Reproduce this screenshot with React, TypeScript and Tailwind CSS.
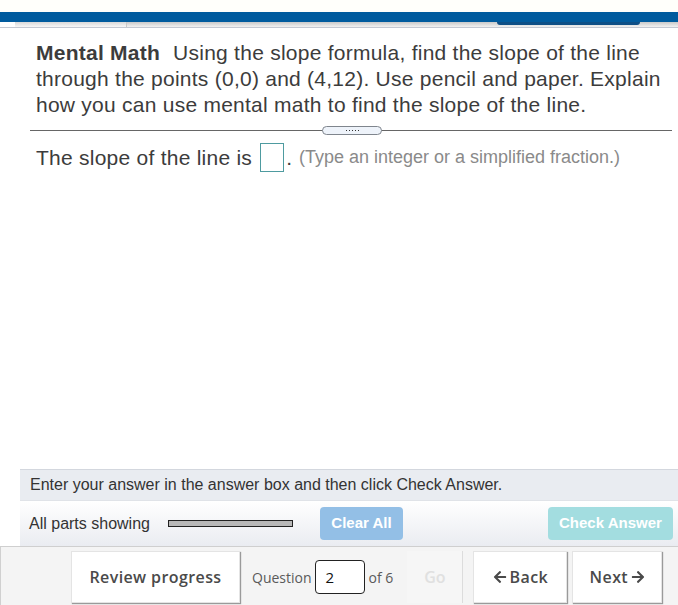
import React from "react";
import { FaArrowLeft, FaArrowRight } from "react-icons/fa";

export default function App() {
  const arial = { fontFamily: '"Liberation Sans", Arial, sans-serif' };
  return (
    <div className="w-[678px] h-[605px] bg-white flex flex-col overflow-hidden" style={arial}>
      {/* top header strip */}
      <div className="h-[12px] bg-[#fffffb] shrink-0" />
      <div className="h-[10px] bg-[#005b9e] shrink-0" />
      <div className="h-[6px] shrink-0 flex bg-gradient-to-b from-[#c9c9c9] to-[#f2f2f2] border-b border-[#c3c8d2]">
        <div className="w-[15px] bg-white" />
        <div className="w-[112px] bg-gradient-to-b from-[#d8d8d8] to-[#f8f8f8] border-r border-[#c8c8c8]" />
        <div className="w-[370px]" />
        <div className="w-[143px] h-[3px] bg-[#0e4f86] rounded-b-[4px]" />
      </div>

      {/* content */}
      <div className="flex-1 ml-[20px] flex flex-col">
        <div className="pl-[16px] pr-[8px] pt-[12px] text-[21px] tracking-[0.25px] leading-[26px] text-[#3c3c3c]">
          <span className="font-bold mr-[13px]">Mental Math</span>Using the slope formula, find the slope of the line through the points (0,0) and (4,12). Use pencil and paper. Explain how you can use mental math to find the slope of the line.
        </div>
        <div className="relative mt-[12px] ml-[10px] mr-[6px] h-[1px] bg-[#666]">
          <div className="absolute left-[292px] top-[-4px] w-[60px] h-[9px] rounded-full border border-[#7f858d] bg-[#eef3fa] flex items-center justify-center gap-[2px]">
            <span className="w-[1px] h-[1px] bg-[#333]" />
            <span className="w-[1px] h-[1px] bg-[#333]" />
            <span className="w-[1px] h-[1px] bg-[#333]" />
            <span className="w-[1px] h-[1px] bg-[#333]" />
            <span className="w-[1px] h-[1px] bg-[#333]" />
          </div>
        </div>
        <div className="mt-[12px] pl-[16px] flex items-center h-[29px]">
          <span className="text-[21px] tracking-[0.25px] text-[#3c3c3c]">The slope of the line is</span>
          <span className="ml-[8px] w-[24px] h-[29px] border border-[#4e9ba0] bg-white" />
          <span className="text-[21px] text-[#3c3c3c] ml-[2px]">.</span>
          <span className="text-[18px] text-[#8a8a8a] ml-[7px]">(Type an integer or a simplified fraction.)</span>
        </div>
      </div>

      {/* instruction bar */}
      <div className="ml-[20px] h-[31px] shrink-0 bg-[#e9ecf1] border-t border-[#d3d7de] flex items-center pl-[10px] text-[16px] text-[#333]">
        Enter your answer in the answer box and then click Check Answer.
      </div>
      <div className="ml-[20px] h-[46px] shrink-0 bg-gradient-to-b from-[#ffffff] to-[#eaecf1] border-t border-[#e0e3e8] flex items-center">
        <span className="ml-[9px] text-[16px] text-[#333]">All parts showing</span>
        <div className="ml-[18px] w-[125px] h-[7px] bg-[#b8b8b8] border border-[#222]" />
        <div className="ml-[27px] w-[83px] h-[33px] rounded-[4px] bg-[#93bfe6] text-white font-bold text-[15px] flex items-center justify-center">
          Clear All
        </div>
        <div className="ml-[145px] w-[125px] h-[33px] rounded-[4px] bg-[#a3dde0] text-white font-bold text-[15px] flex items-center justify-center">
          Check Answer
        </div>
      </div>

      {/* footer */}
      <div
        className="h-[59px] shrink-0 bg-[#f4f4f4] border-t border-[#cfcfcf] border-l border-l-[#d0d0d0] flex items-start pt-[4px]"
        style={{ fontFamily: '"Open Sans", sans-serif' }}
      >
        <div className="ml-[70px] w-[169px] h-[52px] bg-white border border-[#e4e4e4] shadow-[1px_1px_1px_#9a9a9a] flex items-center justify-center text-[16px] tracking-[0.4px] font-semibold text-[#4a4a4a]">
          Review progress
        </div>
        <div className="h-[52px] flex items-center">
          <span className="ml-[12px] text-[14px] text-[#5a5a5a]">Question</span>
          <div className="ml-[3px] w-[50px] h-[34px] rounded-[4px] border border-[#222] bg-white flex items-center pl-[10px] text-[15px] text-[#111]">
            2
          </div>
          <span className="ml-[4px] text-[14px] text-[#5a5a5a]">of 6</span>
        </div>
        <div className="ml-[14px] w-[56px] h-[52px] bg-[#f6f6f6] border-r border-[#dcdcdc] flex items-center justify-center text-[16px] font-semibold text-[#e0e0e0]">
          Go
        </div>
        <div className="ml-[10px] w-[94px] h-[52px] bg-white border border-[#e4e4e4] shadow-[1px_1px_1px_#9a9a9a] flex items-center justify-center text-[16px] tracking-[0.4px] font-semibold text-[#4a4a4a]">
          <FaArrowLeft className="w-[14px] h-[14px] mr-[3px]" />
          Back
        </div>
        <div className="ml-[5px] w-[90px] h-[52px] bg-white border border-[#e4e4e4] shadow-[1px_1px_1px_#9a9a9a] flex items-center justify-center text-[16px] tracking-[0.4px] font-semibold text-[#4a4a4a]">
          Next
          <FaArrowRight className="w-[14px] h-[14px] ml-[3px]" />
        </div>
      </div>
    </div>
  );
}
